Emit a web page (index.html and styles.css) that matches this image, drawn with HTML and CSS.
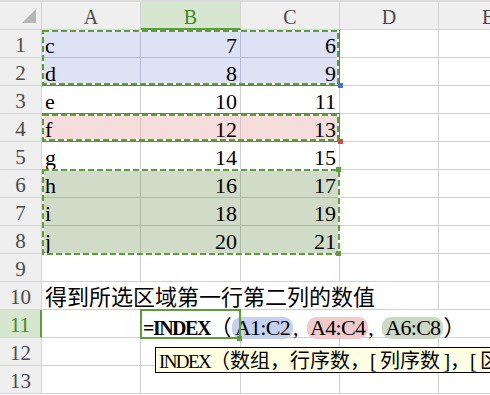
FILE: index.html
```html
<!DOCTYPE html>
<html lang="zh-CN">
<head>
    <meta charset="UTF-8">
    <title>INDEX</title>
    <link rel="stylesheet" href="styles.css">
</head>
<body>
    <div class="sheet">
        <div class="corner">
            <svg width="14" height="14" viewBox="0 0 14 14"><polygon points="14,0 14,14 0,14" fill="#b6b6b6"/></svg>
        </div>
        <div class="col-head">A</div>
        <div class="col-head active">B</div>
        <div class="col-head">C</div>
        <div class="col-head">D</div>
        <div class="col-head">E</div>

        <div class="row-head">1</div>
        <div class="cell blue">c</div>
        <div class="cell blue num">7</div>
        <div class="cell blue num">6</div>
        <div class="cell"></div>
        <div class="cell"></div>

        <div class="row-head">2</div>
        <div class="cell blue">d</div>
        <div class="cell blue num">8</div>
        <div class="cell blue num">9</div>
        <div class="cell"></div>
        <div class="cell"></div>

        <div class="row-head">3</div>
        <div class="cell">e</div>
        <div class="cell num">10</div>
        <div class="cell num">11</div>
        <div class="cell"></div>
        <div class="cell"></div>

        <div class="row-head">4</div>
        <div class="cell red">f</div>
        <div class="cell red num">12</div>
        <div class="cell red num">13</div>
        <div class="cell"></div>
        <div class="cell"></div>

        <div class="row-head">5</div>
        <div class="cell">g</div>
        <div class="cell num">14</div>
        <div class="cell num">15</div>
        <div class="cell"></div>
        <div class="cell"></div>

        <div class="row-head">6</div>
        <div class="cell green">h</div>
        <div class="cell green num">16</div>
        <div class="cell green num">17</div>
        <div class="cell"></div>
        <div class="cell"></div>

        <div class="row-head">7</div>
        <div class="cell green">i</div>
        <div class="cell green num">18</div>
        <div class="cell green num">19</div>
        <div class="cell"></div>
        <div class="cell"></div>

        <div class="row-head">8</div>
        <div class="cell green">j</div>
        <div class="cell green num">20</div>
        <div class="cell green num">21</div>
        <div class="cell"></div>
        <div class="cell"></div>

        <div class="row-head">9</div>
        <div class="cell"></div>
        <div class="cell"></div>
        <div class="cell"></div>
        <div class="cell"></div>
        <div class="cell"></div>

        <div class="row-head">10</div>
        <div class="cell cjk span4">得到所选区域第一行第二列的数值</div>
        <div class="cell"></div>

        <div class="row-head active">11</div>
        <div class="cell"></div>
        <div class="cell formula span4"><span class="fx">=INDEX</span><span class="paren">（</span><span class="ref ref-blue">A1:C2</span><span class="comma">,</span><span class="ref ref-red">A4:C4</span><span class="comma">,</span><span class="ref ref-green">A6:C8</span><span class="paren">）</span></div>

        <div class="row-head">12</div>
        <div class="cell"></div>
        <div class="cell"></div>
        <div class="cell"></div>
        <div class="cell"></div>
        <div class="cell"></div>

        <div class="row-head">13</div>
        <div class="cell"></div>
        <div class="cell"></div>
        <div class="cell"></div>
        <div class="cell"></div>
        <div class="cell"></div>

        <!-- referenced ranges -->
        <div class="range range-blue">
            <svg width="297" height="55"><rect x="1" y="1" width="295" height="53" class="ants-bg"/><rect x="1" y="1" width="295" height="53" class="ants"/></svg>
        </div>
        <div class="range range-red">
            <svg width="297" height="27"><rect x="1" y="1" width="295" height="25" class="ants-bg"/><rect x="1" y="1" width="295" height="25" class="ants"/></svg>
        </div>
        <div class="range range-green">
            <svg width="298" height="86"><rect x="1" y="1" width="296" height="84" class="ants-bg"/><rect x="1" y="1" width="296" height="84" class="ants"/></svg>
        </div>
        <div class="handle handle-blue"></div>
        <div class="handle handle-red"></div>
        <div class="handle handle-green-top"></div>
        <div class="handle handle-green-bottom"></div>

        <div class="selection"></div>
        <div class="handle handle-sel"></div>

        <div class="tip"><span class="lat">INDEX</span>（数组，行序数，<span class="half">[</span>列序数<span class="half right">]</span>，<span class="half">[</span>区域序数<span class="half right">]</span>）</div>
    </div>
</body>
</html>
```

FILE: styles.css
```css
* {
    box-sizing: border-box;
}
body {
    margin: 0;
    overflow: hidden;
    background: #fff;
    font-family: "Liberation Serif", "Noto Sans CJK SC", serif;
}
.sheet {
    position: relative;
    display: grid;
    grid-template-columns: 42px 99px 100px 99px 99px 99px;
    grid-template-rows: 30px repeat(13, 28px);
    width: 538px;
}
.corner,
.col-head,
.row-head {
    background: #efefef;
    border-right: 1px solid #d4d4d4;
    border-bottom: 1px solid #d4d4d4;
    color: #4a4a4a;
}
.corner {
    border-top: 2px solid #dcdcdc;
    display: flex;
    justify-content: flex-end;
    align-items: flex-end;
    padding: 0 5px 6px 0;
}
.corner svg {
    display: block;
}
.col-head {
    border-top: 2px solid #dcdcdc;
    text-align: center;
    font-size: 20px;
    line-height: 23px;
    padding-top: 4px;
}
.col-head.active {
    background: #d7e6cf;
    color: #3d8a28;
    border-bottom: 2px solid #5b9e3a;
}
.row-head {
    text-align: center;
    font-size: 21px;
    line-height: 23px;
    padding-top: 4px;
}
.row-head.active {
    background: #d7e6cf;
    color: #3d8a28;
    border-right: 2px solid #5b9e3a;
}
.cell {
    border-right: 1px solid #d0d0d0;
    border-bottom: 1px solid #d0d0d0;
    font-size: 22px;
    line-height: 23px;
    padding: 4px 3px 0;
    white-space: nowrap;
    color: #000;
}
.num {
    text-align: right;
}
.blue {
    background: #dde3f5;
    border-color: #b5bbd2;
}
.red {
    background: #f5dddc;
    border-color: #dcc0c0;
}
.green {
    background: #d0dcc8;
    border-color: #aebaa6;
}
.span4 {
    grid-column: span 4;
}
.cjk {
    font-family: "Noto Sans CJK SC", sans-serif;
    padding-top: 2px;
}
.formula {
    padding-left: 2px;
}
.fx {
    font-weight: 700;
    font-size: 20px;
    letter-spacing: -1.5px;
}
.paren {
    font-family: "Noto Sans CJK SC", sans-serif;
}
.ref {
    display: inline-block;
    padding: 0 3px;
    border-radius: 9px;
    line-height: 22px;
    letter-spacing: -0.7px;
}
.ref-blue {
    background: #c6d0ef;
}
.ref-red {
    background: #f1cbcb;
}
.ref-green {
    background: #cbd9c4;
}
.comma {
    display: inline-block;
    width: 14px;
}
.range {
    position: absolute;
    left: 42px;
    width: 298px;
}
.range svg {
    display: block;
}
.ants-bg {
    fill: none;
    stroke: #fff;
    stroke-width: 2;
}
.ants {
    fill: none;
    stroke: #5b9e3a;
    stroke-width: 2;
    stroke-dasharray: 6 3;
}
.range-blue {
    top: 30px;
    height: 56px;
    border-right: 1px solid #4a6fce;
    border-bottom: 1px solid #4a6fce;
}
.range-red {
    top: 113px;
    height: 29px;
    border-top: 1px solid #c8504a;
    border-right: 1px solid #c8504a;
    border-bottom: 1px solid #c8504a;
}
.range-green {
    top: 169px;
    height: 86px;
}
.handle {
    position: absolute;
    width: 5px;
    height: 5px;
}
.handle-blue {
    left: 338px;
    top: 83px;
    background: #4a6fce;
}
.handle-red {
    left: 338px;
    top: 139px;
    background: #c8504a;
}
.handle-green-top {
    left: 336px;
    top: 167px;
    background: #5b9e3a;
}
.handle-green-bottom {
    left: 336px;
    top: 251px;
    background: #5b9e3a;
}
.selection {
    position: absolute;
    left: 140px;
    top: 309px;
    width: 101px;
    height: 30px;
    border: 2px solid #5b9e3a;
}
.handle-sel {
    left: 237px;
    top: 336px;
    background: #5b9e3a;
}
.tip {
    position: absolute;
    left: 155px;
    top: 347px;
    width: 400px;
    height: 26px;
    background: #ffffe1;
    border: 1px solid #000;
    padding-left: 3px;
    font-family: "Noto Sans CJK SC", sans-serif;
    font-size: 20px;
    line-height: 24px;
    white-space: nowrap;
    overflow: hidden;
}
.lat {
    font-family: "Liberation Serif", serif;
    font-size: 19px;
    letter-spacing: -1.6px;
}
.half {
    display: inline-block;
    width: 10px;
    font-family: "Liberation Serif", serif;
}
.half.right {
    text-align: right;
}
```
